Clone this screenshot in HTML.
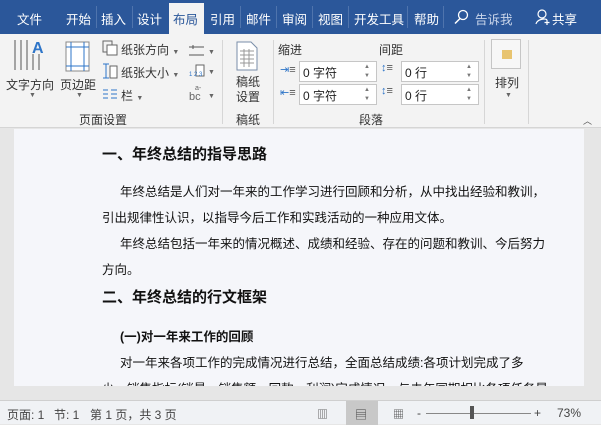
<!DOCTYPE html>
<html><head><meta charset="utf-8"><style>
*{margin:0;padding:0;box-sizing:border-box}
body{width:601px;height:424px;overflow:hidden;background:#e6e6e6;font-family:"Liberation Sans","Noto Sans CJK SC",sans-serif;position:relative;color:#222}
.a{position:absolute;white-space:nowrap}
#top{position:absolute;left:0;top:0;width:601px;height:34px;background:#2b579a}
.tab{position:absolute;top:9px;color:#fff;font-size:12.5px}
.sep{position:absolute;top:6px;width:1px;height:22px;background:#4f74ad}
#rib{position:absolute;left:0;top:34px;width:601px;height:94px;background:#f3f3f3;border-bottom:1px solid #d5d5d5}
.r{font-size:12px;color:#333}
.gl{font-size:12px;color:#333}
.vs{position:absolute;top:40px;width:1px;height:84px;background:#d6d6d6}
.box{position:absolute;width:78px;height:21px;border:1px solid #c6c6c6;background:#fff;font-size:12px;padding:2px 0 0 3px;color:#222}
.box i{position:absolute;right:6px;font-style:normal;font-size:6px;color:#777}
#page{position:absolute;left:14px;top:129px;width:570px;height:262px;background:#f5f6fa}
.p{font-size:12.5px;color:#111}
.h{font-size:15px;font-weight:bold;color:#111}
#st{position:absolute;left:0;top:400px;width:601px;height:24px;background:#f0f2f5;border-top:1px solid #cfcfcf}
.s{font-size:12px;color:#444;top:5px}
</style></head><body>
<div id="top">
<span class="tab" style="left:17px">文件</span>
<span class="tab" style="left:66px">开始</span><div class="sep" style="left:96px"></div>
<span class="tab" style="left:101px">插入</span><div class="sep" style="left:132px"></div>
<span class="tab" style="left:137px">设计</span>
<div style="position:absolute;left:169px;top:3px;width:35px;height:31px;background:#f3f3f3"></div>
<span class="tab" style="left:173px;color:#2b579a">布局</span>
<span class="tab" style="left:210px">引用</span><div class="sep" style="left:240px"></div>
<span class="tab" style="left:246px">邮件</span><div class="sep" style="left:276px"></div>
<span class="tab" style="left:282px">审阅</span><div class="sep" style="left:312px"></div>
<span class="tab" style="left:318px">视图</span><div class="sep" style="left:348px"></div>
<span class="tab" style="left:354px">开发工具</span><div class="sep" style="left:407px"></div>
<span class="tab" style="left:414px">帮助</span><div class="sep" style="left:443px"></div>
<svg class="a" style="left:453px;top:9px" width="16" height="16"><circle cx="10" cy="6" r="4.5" fill="none" stroke="#fff" stroke-width="1.3"/><line x1="7" y1="9.5" x2="2" y2="14.5" stroke="#fff" stroke-width="1.5"/></svg>
<span class="tab" style="left:475px;color:#c9d5ea">告诉我</span>
<svg class="a" style="left:535px;top:9px" width="16" height="17"><circle cx="7" cy="5" r="4" fill="none" stroke="#fff" stroke-width="1.2"/><path d="M1 15 C2 10 11 9 12 11" fill="none" stroke="#fff" stroke-width="1.2"/><path d="M12 11v5M9.5 13.5h5" stroke="#fff" stroke-width="1.2"/></svg>
<span class="tab" style="left:552px">共享</span>
</div>
<div id="rib"></div>
<svg class="a" style="left:12px;top:38px" width="34" height="36"><g stroke="#555" stroke-width="1"><line x1="3" y1="2" x2="3" y2="32"/><line x1="9" y1="2" x2="9" y2="32"/><line x1="15" y1="2" x2="15" y2="32"/><line x1="21" y1="16" x2="21" y2="32"/><line x1="27" y1="16" x2="27" y2="32"/></g><text x="20" y="15" font-size="16" font-weight="bold" fill="#2e75c8" font-family="Liberation Sans">A</text></svg>
<span class="a r" style="left:6px;top:76px">文字方向</span>
<span class="a" style="left:29px;top:92px;font-size:7px;color:#666">▼</span>
<svg class="a" style="left:65px;top:41px" width="26" height="32"><rect x="1" y="1" width="23" height="29" fill="#fff" stroke="#888"/><g stroke="#2e75c8"><line x1="6" y1="1" x2="6" y2="30"/><line x1="19" y1="1" x2="19" y2="30"/><line x1="1" y1="6" x2="24" y2="6"/><line x1="1" y1="25" x2="24" y2="25"/></g></svg>
<span class="a r" style="left:60px;top:76px">页边距</span>
<span class="a" style="left:76px;top:92px;font-size:7px;color:#666">▼</span>
<svg class="a" style="left:102px;top:40px" width="16" height="16"><rect x="1" y="1" width="9" height="11" fill="none" stroke="#666"/><rect x="5" y="5" width="10" height="10" fill="#fff" stroke="#666"/></svg>
<span class="a r" style="left:121px;top:41px">纸张方向 <span style="font-size:7px;color:#666">▼</span></span>
<svg class="a" style="left:102px;top:62px" width="16" height="18"><path d="M1 2h6M4 2v14M1 16h6" stroke="#2e75c8" fill="none"/><rect x="8" y="4" width="7" height="12" fill="#fff" stroke="#666"/></svg>
<span class="a r" style="left:121px;top:64px">纸张大小 <span style="font-size:7px;color:#666">▼</span></span>
<svg class="a" style="left:102px;top:88px" width="16" height="12"><g stroke="#2e75c8"><line x1="1" y1="2" x2="6" y2="2"/><line x1="1" y1="6" x2="6" y2="6"/><line x1="1" y1="10" x2="6" y2="10"/><line x1="9" y1="2" x2="15" y2="2"/><line x1="9" y1="6" x2="15" y2="6"/><line x1="9" y1="10" x2="15" y2="10"/></g></svg>
<span class="a r" style="left:121px;top:87px">栏 <span style="font-size:7px;color:#666">▼</span></span>
<svg class="a" style="left:188px;top:42px" width="28" height="60"><path d="M1 5h15M1 13h15M5 3v4" stroke="#555" fill="none"/><path d="M2 6l-0 0" stroke="#2e75c8"/><text x="20" y="12" font-size="7" fill="#666">▼</text><rect x="8" y="23" width="8" height="11" fill="#fff" stroke="#666"/><text x="1" y="34" font-size="6" fill="#2e75c8">1 2 3</text><text x="20" y="32" font-size="7" fill="#666">▼</text><text x="1" y="58" font-size="11" fill="#666">bc</text><text x="7" y="48" font-size="7" fill="#666">a-</text><text x="20" y="56" font-size="7" fill="#666">▼</text></svg>
<span class="a gl" style="left:79px;top:111px">页面设置</span>
<div class="vs" style="left:222px"></div>
<svg class="a" style="left:236px;top:41px" width="22" height="30"><path d="M1 1h14l6 6v22H1z" fill="#fff" stroke="#7a8ea8"/><g stroke="#999"><line x1="4" y1="10" x2="18" y2="10"/><line x1="4" y1="14" x2="18" y2="14"/><line x1="4" y1="18" x2="18" y2="18"/><line x1="4" y1="22" x2="18" y2="22"/><line x1="8" y1="8" x2="8" y2="26"/><line x1="13" y1="8" x2="13" y2="26"/></g></svg>
<span class="a r" style="left:236px;top:75px;line-height:15px;white-space:normal;width:26px">稿纸设置</span>
<span class="a gl" style="left:236px;top:111px">稿纸</span>
<div class="vs" style="left:273px"></div>
<span class="a r" style="left:278px;top:41px">缩进</span>
<span class="a r" style="left:379px;top:41px">间距</span>
<span class="a" style="left:280px;top:63px;font-size:11px;color:#2e75c8">⇥<span style="color:#555">≡</span></span>
<span class="a" style="left:280px;top:86px;font-size:11px;color:#2e75c8">⇤<span style="color:#555">≡</span></span>
<div class="box" style="left:299px;top:61px">0 字符<i style="top:2px">▲</i><i style="top:11px">▼</i></div>
<div class="box" style="left:299px;top:84px">0 字符<i style="top:2px">▲</i><i style="top:11px">▼</i></div>
<span class="a" style="left:381px;top:62px;font-size:11px;color:#2e75c8">↕<span style="color:#555">≡</span></span>
<span class="a" style="left:381px;top:85px;font-size:11px;color:#2e75c8">↕<span style="color:#555">≡</span></span>
<div class="box" style="left:401px;top:61px">0 行<i style="top:2px">▲</i><i style="top:11px">▼</i></div>
<div class="box" style="left:401px;top:84px">0 行<i style="top:2px">▲</i><i style="top:11px">▼</i></div>
<span class="a gl" style="left:359px;top:111px">段落</span>
<div class="vs" style="left:484px"></div>
<div class="a" style="left:491px;top:39px;width:30px;height:30px;border:1px solid #c6c6c6;background:#f7f7f7"></div>
<div class="a" style="left:502px;top:50px;width:10px;height:9px;background:#e8c470"></div>
<span class="a r" style="left:495px;top:74px">排列</span>
<span class="a" style="left:505px;top:92px;font-size:7px;color:#666">▼</span>
<div class="vs" style="left:528px"></div>
<span class="a" style="left:583px;top:114px;font-size:9px;color:#555">︿</span>
<div id="page"></div>
<span class="a h" style="left:102px;top:143px">一、年终总结的指导思路</span>
<span class="a p" style="left:120px;top:181px">年终总结是人们对一年来的工作学习进行回顾和分析，从中找出经验和教训，</span>
<span class="a p" style="left:102px;top:207px">引出规律性认识，以指导今后工作和实践活动的一种应用文体。</span>
<span class="a p" style="left:120px;top:233px">年终总结包括一年来的情况概述、成绩和经验、存在的问题和教训、今后努力</span>
<span class="a p" style="left:102px;top:259px">方向。</span>
<span class="a h" style="left:102px;top:286px">二、年终总结的行文框架</span>
<span class="a p" style="left:120px;top:326px;font-weight:bold">(一)对一年来工作的回顾</span>
<span class="a p" style="left:120px;top:352px">对一年来各项工作的完成情况进行总结，全面总结成绩:各项计划完成了多</span>
<div class="a" style="left:14px;top:376px;width:570px;height:15px;overflow:hidden"><span class="a p" style="left:88px;top:2px">少，销售指标(销量、销售额、回款、利润)完成情况，与去年同期相比各项任务是</span></div>
<div class="a" style="left:0;top:386px;width:601px;height:14px;background:#e6e6e6"></div>
<div id="st">
<span class="a s" style="left:7px">页面: 1</span>
<span class="a s" style="left:54px">节: 1</span>
<span class="a s" style="left:90px">第 1 页，共 3 页</span>
<span class="a s" style="left:317px;font-size:11px">▥</span>
<div class="a" style="left:346px;top:0;width:32px;height:24px;background:#c8c8c8"></div>
<span class="a s" style="left:355px;font-size:12px">▤</span>
<span class="a s" style="left:393px;font-size:11px">▦</span>
<span class="a s" style="left:417px">-</span>
<div class="a" style="left:426px;top:12px;width:105px;height:1px;background:#888"></div>
<div class="a" style="left:470px;top:5px;width:4px;height:13px;background:#555"></div>
<span class="a s" style="left:534px">+</span>
<span class="a s" style="left:557px">73%</span>
</div>
</body></html>
